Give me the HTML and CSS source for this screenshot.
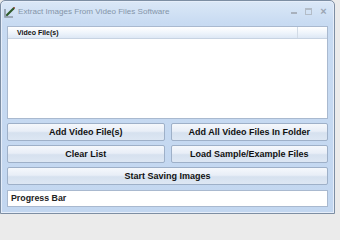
FILE: index.html
```html
<!DOCTYPE html>
<html>
<head>
<meta charset="utf-8">
<link rel="stylesheet" href="styles.css">
</head>
<body>
<div class="window">
  <div class="titlebar">
    <svg class="appicon" width="12" height="12" viewBox="0 0 12 12">
      <path d="M1 3 V11 H9" fill="none" stroke="#8a96a4" stroke-width="1.6"/>
      <path d="M3 9 L9.5 2.5" stroke="#2f5a2a" stroke-width="2.2" stroke-linecap="round"/>
      <path d="M9 1.5 L11 1 L10.5 3 Z" fill="#a03b2a"/>
    </svg>
    <span class="title">Extract Images From Video Files Software</span>
    <div class="wbtns">
      <span class="wb min"></span>
      <span class="wb max"></span>
      <span class="wb close">×</span>
    </div>
  </div>
  <div class="content">
    <div class="listbox">
      <div class="lhead">
        <span class="lcol">Video File(s)</span>
        <span class="lrest"></span>
      </div>
    </div>
    <div class="btnrow">
      <button class="btn">Add Video File(s)</button>
      <button class="btn">Add All Video Files In Folder</button>
    </div>
    <div class="btnrow">
      <button class="btn">Clear List</button>
      <button class="btn">Load Sample/Example Files</button>
    </div>
    <button class="btn wide">Start Saving Images</button>
    <div class="progress">Progress Bar</div>
  </div>
</div>
</body>
</html>
```
FILE: styles.css
```css
html, body {
  margin: 0;
  padding: 0;
}
body {
  background: #ebebeb;
  width: 340px;
  height: 218px;
  overflow: hidden;
  font-family: "Liberation Sans", Arial, sans-serif;
}
.window {
  width: 333px;
  height: 212px;
  border: 1px solid #7d8ea3;
  border-radius: 5px 5px 0 0;
  background: linear-gradient(#dbe8f7 0, #c8dbf2 22px, #c3d7f0 100%);
  box-shadow: inset 0 0 0 1px #e6eefa;
  display: flex;
  flex-direction: column;
}
.titlebar {
  height: 23px;
  display: flex;
  align-items: center;
  padding-left: 3px;
  box-sizing: border-box;
}
.appicon {
  flex: none;
  margin-right: 2px;
  margin-top: -2px;
}
.title {
  font-family: "Liberation Sans", Arial, sans-serif;
  font-size: 8.1px;
  color: #8495a9;
  flex: 1;
  margin-top: -2px;
}
.wbtns {
  display: flex;
  align-items: center;
  gap: 8px;
  margin-right: 7px;
  margin-top: -3px;
}
.wb {
  display: block;
  width: 6px;
  height: 6px;
  color: #9aa5b3;
}
.wb.min {
  border-bottom: 2px solid #a8b1bd;
  height: 2px;
  margin-top: 1px;
}
.wb.max {
  border: 1px solid #b3bcc7;
  border-top-width: 2px;
  width: 5px;
  height: 4px;
}
.wb.close {
  font-size: 11px;
  line-height: 6px;
  width: 7px;
  text-align: center;
  font-weight: bold;
}
.content {
  flex: 1;
  padding: 2px 6px 0 6px;
  display: flex;
  flex-direction: column;
  gap: 4px;
}
.listbox {
  height: 91px;
  background: #fff;
  border: 1px solid #a9b9cf;
}
.lhead {
  height: 11px;
  display: flex;
  background: linear-gradient(#ffffff, #eef4fb 55%, #dde8f5);
  border-bottom: 1px solid #c7d3e2;
}
.lcol {
  width: 290px;
  box-sizing: border-box;
  padding-left: 9px;
  font-size: 7px;
  font-weight: bold;
  color: #111;
  line-height: 12px;
  border-right: 1px solid #d2dbe6;
}
.lrest {
  flex: 1;
}
.btnrow {
  display: flex;
  gap: 6px;
}
.btn {
  flex: 1;
  height: 18px;
  margin: 0;
  padding: 0;
  border: 1px solid #9eb0c8;
  border-radius: 2px;
  background: linear-gradient(#f5f8fc 0, #e8eef7 45%, #d6e1ef 55%, #dde7f3 100%);
  font-family: "Liberation Sans", Arial, sans-serif;
  font-size: 9px;
  font-weight: bold;
  color: #111;
  text-align: center;
  line-height: 16px;
}
.btn.wide {
  flex: none;
  width: 100%;
}
.progress {
  margin-top: 1px;
  height: 17px;
  box-sizing: border-box;
  background: #fff;
  border: 1px solid #a9b9cf;
  font-size: 8.8px;
  font-weight: bold;
  color: #222;
  padding-left: 3px;
  line-height: 15px;
}
```
